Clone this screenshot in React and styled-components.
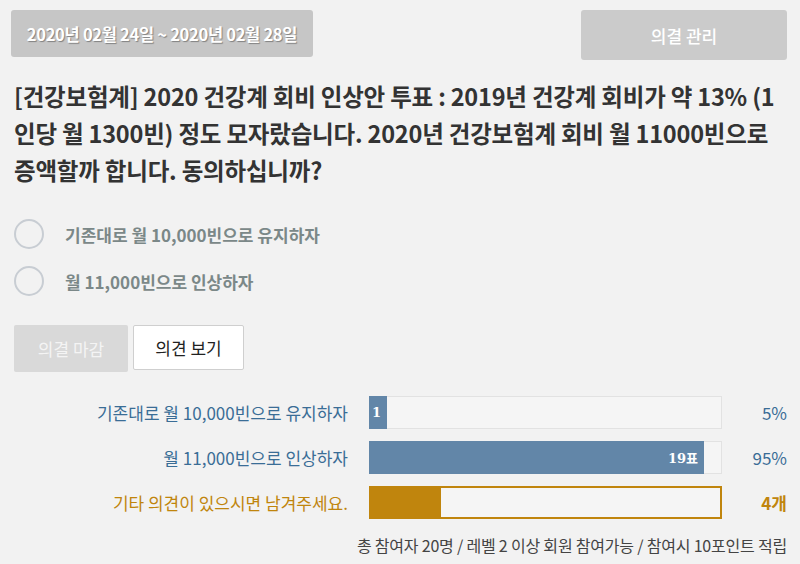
import styled, { createGlobalStyle } from "styled-components";

const GlobalStyle = createGlobalStyle`
  html, body {
    margin: 0;
    padding: 0;
    background: #f2f2f2;
    font-family: "Noto Sans CJK KR", "Noto Sans", sans-serif;
  }
`;

const Page = styled.div`
  width: 800px;
  height: 564px;
  box-sizing: border-box;
  padding: 10px 13px 0 14px;
  overflow: hidden;
`;

const TopBar = styled.div`
  display: flex;
  justify-content: space-between;
  align-items: flex-start;
  margin-left: -3px;
`;

const DateBox = styled.div`
  background: #c6c6c6;
  color: #fff;
  border-radius: 3px;
  height: 47px;
  width: 302px;
  display: flex;
  align-items: center;
  justify-content: center;
  font-size: 16.5px;
  font-weight: 700;
  letter-spacing: -0.3px;
  text-shadow: 1px 1px 1px rgba(0, 0, 0, 0.35);
`;

const ManageButton = styled.button`
  background: #cbcbcb;
  color: #fff;
  border: none;
  border-radius: 3px;
  width: 206px;
  height: 50px;
  font-family: inherit;
  font-size: 17px;
  font-weight: 500;
`;

const Title = styled.h1`
  margin: 18px 0 0;
  font-size: 23.5px;
  font-weight: 700;
  line-height: 37px;
  color: #333;
  letter-spacing: -0.2px;
  white-space: nowrap;
`;

const Options = styled.div`
  display: flex;
  flex-direction: column;
  gap: 17px;
  margin-top: 30px;
`;

const Option = styled.label`
  display: flex;
  align-items: center;
  gap: 21px;
  color: #7b8888;
  font-size: 17px;
  font-weight: 700;
`;

const Radio = styled.span`
  width: 26px;
  height: 26px;
  border: 2px solid #c8cdd3;
  border-radius: 50%;
  flex: none;
`;

const Buttons = styled.div`
  display: flex;
  gap: 5px;
  margin-top: 29px;
`;

const ActionButton = styled.button`
  width: ${(p) => p.$w}px;
  height: ${(p) => p.$h}px;
  border-radius: 2px;
  font-family: inherit;
  font-size: 17px;
  background: ${(p) => (p.$muted ? "#d9d9d9" : "#fff")};
  color: ${(p) => (p.$muted ? "#f4f4f4" : "#222")};
  border: ${(p) => (p.$muted ? "none" : "1px solid #cfcfcf")};
`;

const Results = styled.div`
  display: flex;
  flex-direction: column;
  gap: 12px;
  margin-top: 24px;
`;

const ResultRow = styled.div`
  display: grid;
  grid-template-columns: 334px 353px 1fr;
  column-gap: 21px;
  align-items: center;
`;

const ResultLabel = styled.div`
  text-align: right;
  font-size: 17px;
  color: ${(p) => p.$color};
`;

const Track = styled.div`
  height: 33px;
  box-sizing: border-box;
  background: #f5f5f5;
  border: ${(p) => (p.$outline ? `2px solid ${p.$outline}` : "1px solid #e2e2e2")};
  display: flex;
`;

const Fill = styled.div`
  background: ${(p) => p.$color};
  color: #fff;
  font-family: "DejaVu Serif", "Noto Sans CJK KR", serif;
  font-size: 13px;
  font-weight: 700;
  display: flex;
  align-items: center;
  justify-content: flex-end;
  padding-right: ${(p) => (p.$pad ? 6 : 0)}px;
  box-sizing: border-box;
  margin: ${(p) => (p.$outline ? "-2px 0 -2px -2px" : "-1px 0 -1px -1px")};
  height: calc(100% + ${(p) => (p.$outline ? 4 : 2)}px);
`;

const Value = styled.div`
  text-align: right;
  font-size: 17px;
  font-weight: ${(p) => (p.$bold ? 700 : 400)};
  color: ${(p) => p.$color};
`;

const Footer = styled.div`
  margin-top: 14px;
  text-align: right;
  font-size: 16px;
  color: #444;
  letter-spacing: -0.2px;
`;

const BLUE = "#6286a8";
const BLUE_TEXT = "#3a6d96";
const GOLD = "#c0850d";

const results = [
  { label: "기존대로 월 10,000빈으로 유지하자", fill: 18, tag: "1", value: "5%" },
  { label: "월 11,000빈으로 인상하자", fill: 335, tag: "19표", value: "95%" },
];

export default function App() {
  return (
    <Page>
      <GlobalStyle />
      <TopBar>
        <DateBox>2020년 02월 24일 ~ 2020년 02월 28일</DateBox>
        <ManageButton>의결 관리</ManageButton>
      </TopBar>

      <Title>
        [건강보험계] 2020 건강계 회비 인상안 투표 : 2019년 건강계 회비가 약 13% (1
        <br />
        인당 월 1300빈) 정도 모자랐습니다. 2020년 건강보험계 회비 월 11000빈으로
        <br />
        증액할까 합니다. 동의하십니까?
      </Title>

      <Options>
        <Option>
          <Radio />
          기존대로 월 10,000빈으로 유지하자
        </Option>
        <Option>
          <Radio />
          월 11,000빈으로 인상하자
        </Option>
      </Options>

      <Buttons>
        <ActionButton $muted $w={114} $h={47}>
          의결 마감
        </ActionButton>
        <ActionButton $w={111} $h={45}>
          의견 보기
        </ActionButton>
      </Buttons>

      <Results>
        {results.map((r) => (
          <ResultRow key={r.label}>
            <ResultLabel $color={BLUE_TEXT}>{r.label}</ResultLabel>
            <Track>
              <Fill $color={BLUE} $pad style={{ width: r.fill }}>
                {r.tag}
              </Fill>
            </Track>
            <Value $color={BLUE_TEXT}>{r.value}</Value>
          </ResultRow>
        ))}
        <ResultRow>
          <ResultLabel $color={GOLD}>기타 의견이 있으시면 남겨주세요.</ResultLabel>
          <Track $outline={GOLD}>
            <Fill $color={GOLD} $outline={GOLD} style={{ width: 72 }} />
          </Track>
          <Value $color={GOLD} $bold>
            4개
          </Value>
        </ResultRow>
      </Results>

      <Footer>총 참여자 20명 / 레벨 2 이상 회원 참여가능 / 참여시 10포인트 적립</Footer>
    </Page>
  );
}
